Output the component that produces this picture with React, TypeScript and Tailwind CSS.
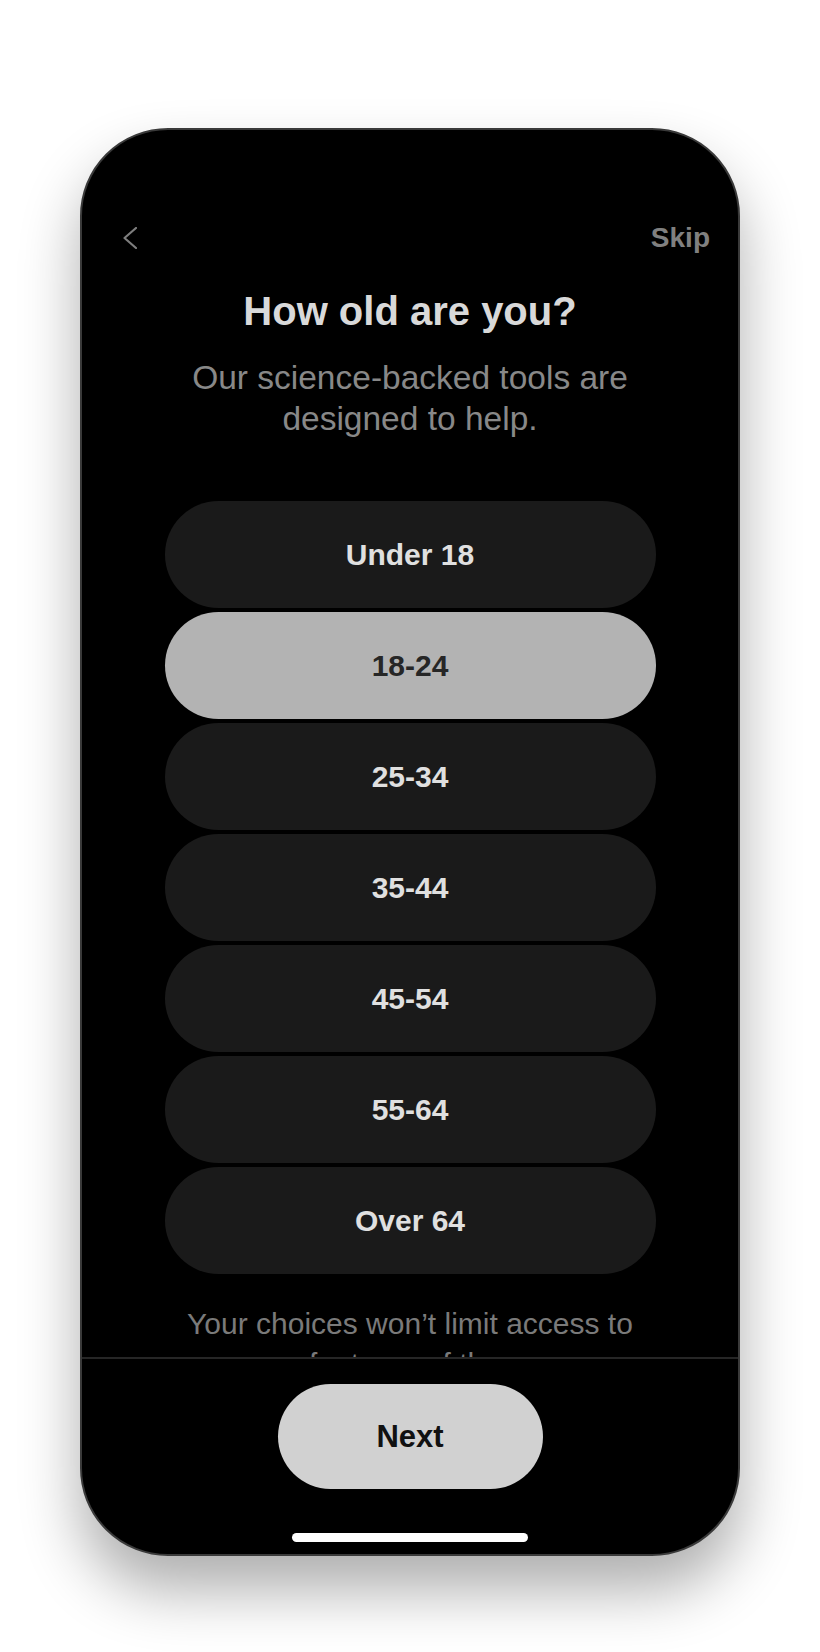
import { useState } from 'react';

const ages = ['Under 18', '18-24', '25-34', '35-44', '45-54', '55-64', 'Over 64'];

function BackIcon() {
  return (
    <svg width="14" height="22" viewBox="0 0 14 22" fill="none">
      <path d="M13 1 L1.5 11 L13 21" stroke="#7d7d7d" strokeWidth="2.2" strokeLinecap="round" strokeLinejoin="round" />
    </svg>
  );
}

export default function App() {
  const [selected, setSelected] = useState('18-24');

  return (
    <div className="w-full h-[1652px] bg-white flex justify-center pt-[128px] font-['Liberation_Sans',Arial,sans-serif]">
      <div className="w-[660px] h-[1428px] rounded-[88px] border-2 border-[#3a3a3a] bg-black overflow-hidden flex flex-col shadow-[0_34px_60px_rgba(0,0,0,0.32)]">
        {/* Scrollable content */}
        <div className="flex-1 min-h-0 overflow-hidden flex flex-col">
          <div className="flex items-center justify-between h-[28px] mt-[94px] pl-[41px] pr-[28px]">
            <button className="flex items-center">
              <BackIcon />
            </button>
            <button className="text-[28px] leading-[28px] font-bold text-[#808080]">Skip</button>
          </div>

          <h1 className="mt-[35px] text-center text-[40px] leading-[48px] font-bold text-[#d9d9d9]">
            How old are you?
          </h1>
          <p className="mt-[22px] text-center text-[33.5px] leading-[41px] text-[#888888]">
            Our science-backed tools are
            <br />
            designed to help.
          </p>

          <div className="mt-[62px] w-[491px] mx-auto flex flex-col gap-[4px]">
            {ages.map((age) => {
              const active = age === selected;
              return (
                <button
                  key={age}
                  onClick={() => setSelected(age)}
                  className={`h-[107px] w-full rounded-full flex items-center justify-center text-[30px] leading-[30px] font-bold ${
                    active ? 'bg-[#b3b3b3] text-[#262626]' : 'bg-[#1a1a1a] text-[#e0e0e0]'
                  }`}
                >
                  {age}
                </button>
              );
            })}
          </div>

          <p className="mt-[30px] shrink-0 text-center text-[30px] leading-[40px] text-[#7a7a7a]">
            Your choices won’t limit access to
            <br />
            any features of the app.
          </p>
        </div>

        {/* Bottom bar */}
        <div className="h-[197px] shrink-0 border-t-2 border-[#262626] flex flex-col items-center">
          <button className="mt-[25px] w-[265px] h-[105px] rounded-full bg-[#d1d1d1] text-[31px] leading-[31px] font-bold text-[#111111]">
            Next
          </button>
          <div className="mt-[44px] w-[236px] h-[9px] rounded-full bg-white" />
        </div>
      </div>
    </div>
  );
}
